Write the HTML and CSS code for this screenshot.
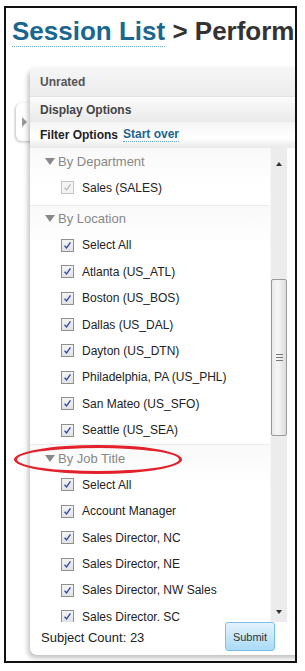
FILE: index.html
```html
<!DOCTYPE html>
<html lang="en">

<head>
    <meta charset="UTF-8">
    <title>Session List</title>
    <link rel="stylesheet" href="styles.css">
</head>

<body>

    <div class="frame">
        <div class="page-title">
            <span class="crumb">Session List</span> &gt; Performance Review
        </div>

        <div class="side-tab">
            <span class="side-arrow"></span>
        </div>

        <div class="panel">
            <div class="hdr hdr-unrated">Unrated</div>
            <div class="hdr hdr-display">Display Options</div>
            <div class="hdr hdr-filter">Filter Options <a class="start-over" href="#">Start over</a></div>

            <div class="filter-box">
                <div class="filter-list">
                    <div class="group">
                        <div class="group-title"><span class="tri"></span>By Department</div>
                        <label class="item disabled"><span class="cb"><svg viewBox="0 0 13 13"><path d="M3 6.8 L5.4 9.4 L10 2.8" /></svg></span>Sales (SALES)</label>
                    </div>
                    <div class="group tight">
                        <div class="group-title"><span class="tri"></span>By Location</div>
                        <label class="item"><span class="cb"><svg viewBox="0 0 13 13"><path d="M3 6.8 L5.4 9.4 L10 2.8" /></svg></span>Select All</label>
                        <label class="item"><span class="cb"><svg viewBox="0 0 13 13"><path d="M3 6.8 L5.4 9.4 L10 2.8" /></svg></span>Atlanta (US_ATL)</label>
                        <label class="item"><span class="cb"><svg viewBox="0 0 13 13"><path d="M3 6.8 L5.4 9.4 L10 2.8" /></svg></span>Boston (US_BOS)</label>
                        <label class="item"><span class="cb"><svg viewBox="0 0 13 13"><path d="M3 6.8 L5.4 9.4 L10 2.8" /></svg></span>Dallas (US_DAL)</label>
                        <label class="item"><span class="cb"><svg viewBox="0 0 13 13"><path d="M3 6.8 L5.4 9.4 L10 2.8" /></svg></span>Dayton (US_DTN)</label>
                        <label class="item"><span class="cb"><svg viewBox="0 0 13 13"><path d="M3 6.8 L5.4 9.4 L10 2.8" /></svg></span>Philadelphia, PA (US_PHL)</label>
                        <label class="item"><span class="cb"><svg viewBox="0 0 13 13"><path d="M3 6.8 L5.4 9.4 L10 2.8" /></svg></span>San Mateo (US_SFO)</label>
                        <label class="item"><span class="cb"><svg viewBox="0 0 13 13"><path d="M3 6.8 L5.4 9.4 L10 2.8" /></svg></span>Seattle (US_SEA)</label>
                    </div>
                    <div class="group">
                        <div class="group-title"><span class="tri"></span>By Job Title</div>
                        <label class="item"><span class="cb"><svg viewBox="0 0 13 13"><path d="M3 6.8 L5.4 9.4 L10 2.8" /></svg></span>Select All</label>
                        <label class="item"><span class="cb"><svg viewBox="0 0 13 13"><path d="M3 6.8 L5.4 9.4 L10 2.8" /></svg></span>Account Manager</label>
                        <label class="item"><span class="cb"><svg viewBox="0 0 13 13"><path d="M3 6.8 L5.4 9.4 L10 2.8" /></svg></span>Sales Director, NC</label>
                        <label class="item"><span class="cb"><svg viewBox="0 0 13 13"><path d="M3 6.8 L5.4 9.4 L10 2.8" /></svg></span>Sales Director, NE</label>
                        <label class="item"><span class="cb"><svg viewBox="0 0 13 13"><path d="M3 6.8 L5.4 9.4 L10 2.8" /></svg></span>Sales Director, NW Sales</label>
                        <label class="item"><span class="cb"><svg viewBox="0 0 13 13"><path d="M3 6.8 L5.4 9.4 L10 2.8" /></svg></span>Sales Director. SC</label>
                    </div>
                </div>

                <div class="scrollbar">
                    <span class="arrow-up"></span>
                    <div class="thumb"><span class="grip"></span></div>
                    <span class="arrow-down"></span>
                </div>
                <div class="filler"></div>
            </div>

            <div class="panel-foot">
                <span class="count">Subject Count: 23</span>
                <button class="submit">Submit</button>
            </div>
        </div>

        <!-- annotation -->
        <div class="circle-mark"></div>
    </div>

</body>

</html>
```

FILE: styles.css
```css
* {
    box-sizing: border-box;
}

body {
    margin: 0;
    background-color: white;
    font-family: 'Liberation Sans', Arial, sans-serif;
}

.frame {
    position: relative;
    margin: 6px 0 0 4px;
    width: 293px;
    height: 657px;
    border: 2px solid #111;
    overflow: hidden;
}

.page-title {
    height: 59px;
    padding: 8px 0 0 6px;
    font-size: 26px;
    line-height: 30px;
    font-weight: bold;
    color: #333;
    white-space: nowrap;
}

.crumb {
    color: #1b6690;
    border-bottom: 1px dotted #6ea8c8;
}

.side-tab {
    position: absolute;
    left: 10px;
    top: 95px;
    width: 20px;
    height: 38px;
    background-color: white;
    border-radius: 6px 0 0 6px;
    box-shadow: -1px 1px 3px rgba(0, 0, 0, 0.25);
}

.side-arrow {
    position: absolute;
    left: 6px;
    top: 14px;
    border-left: 5px solid #999;
    border-top: 5px solid transparent;
    border-bottom: 5px solid transparent;
}

.panel {
    position: relative;
    margin-left: 24px;
    width: 290px;
    background-color: white;
    border-radius: 7px 0 0 7px;
    box-shadow: -2px 3px 5px rgba(0, 0, 0, 0.25);
}

.hdr {
    padding-left: 10px;
    font-size: 12px;
    font-weight: bold;
    display: flex;
    align-items: center;
}

.hdr-unrated {
    height: 30px;
    color: #555;
    border-radius: 7px 0 0 0;
    background: linear-gradient(#f6f6f6, #ececec);
    border-bottom: 1px solid #e2e2e2;
}

.hdr-display {
    height: 25px;
    color: #444;
    background: linear-gradient(#fbfbfb, #e9e9e9);
}

.hdr-filter {
    height: 26px;
    color: #222;
    background: linear-gradient(#f4f4f4, #fff 60%, #e9e9e9);
    box-shadow: 0 2px 3px rgba(0, 0, 0, 0.08);
}

.start-over {
    margin-left: 5px;
    color: #1b6690;
    text-decoration: none;
    border-bottom: 1px dotted #6ea8c8;
    line-height: 13px;
}

.filter-box {
    display: flex;
    height: 474px;
}

.filter-list {
    width: 240px;
    overflow: hidden;
}

.group {
    padding-bottom: 4px;
    border-bottom: 1px solid #ececec;
    background: linear-gradient(#f9f9f9, white 40px);
}

.group.tight {
    padding-bottom: 1px;
}

.group-title {
    height: 26.4px;
    display: flex;
    align-items: center;
    padding-left: 15px;
    font-size: 13px;
    color: #888;
}

.tri {
    width: 0;
    height: 0;
    margin-right: 3px;
    border-top: 7px solid #888;
    border-left: 5px solid transparent;
    border-right: 5px solid transparent;
}

.item {
    height: 26.4px;
    display: flex;
    align-items: center;
    padding-left: 31px;
    font-size: 12px;
    color: #222;
}

.cb {
    width: 13px;
    height: 13px;
    margin-right: 8px;
    border: 1px solid #8e8f8f;
    background: linear-gradient(#f4f4f4, #e2e2e2);
    display: flex;
}

.cb svg {
    width: 11px;
    height: 11px;
}

.cb path {
    fill: none;
    stroke: #2d4fa8;
    stroke-width: 1.6;
}

.disabled .cb {
    border-color: #c4c4c4;
    background: #f4f4f4;
}

.disabled .cb path {
    stroke: #bcbcbc;
}

.scrollbar {
    position: relative;
    width: 17px;
    background-color: #ececec;
    border-left: 1px solid #f6f6f6;
}

.arrow-up {
    position: absolute;
    left: 5px;
    top: 14px;
    border-bottom: 4px solid #333;
    border-left: 3.5px solid transparent;
    border-right: 3.5px solid transparent;
}

.arrow-down {
    position: absolute;
    left: 5px;
    bottom: 8px;
    border-top: 4px solid #333;
    border-left: 3.5px solid transparent;
    border-right: 3.5px solid transparent;
}

.thumb {
    margin: 131px 0 0 0;
    height: 157px;
    border: 1px solid #9a9a9a;
    border-radius: 2px;
    background: linear-gradient(to right, #e8e8e8, #f6f6f6 40%, #dcdcdc);
    display: flex;
    align-items: center;
    justify-content: center;
}

.grip {
    width: 7px;
    height: 7px;
    border-top: 1px solid #777;
    border-bottom: 1px solid #777;
    background: linear-gradient(transparent 2px, #777 2px, #777 3px, transparent 3px);
}

.filler {
    flex: 1;
    background-color: #fdfdfd;
}

.panel-foot {
    height: 33px;
    display: flex;
    align-items: center;
    padding: 0 22px 2px 11px;
    position: relative;
    width: 267px;
}

.count {
    flex: 1;
    font-size: 13px;
    color: #222;
}

.submit {
    width: 50px;
    height: 29px;
    margin-top: -2px;
    padding: 0;
    font-family: 'Liberation Sans', Arial, sans-serif;
    font-size: 11px;
    color: #333;
    border: 1px solid #7cc0e8;
    border-radius: 3px;
    background: linear-gradient(#e4f3fc, #a9daf6);
}

.circle-mark {
    position: absolute;
    left: 8px;
    top: 437px;
    width: 168px;
    height: 29px;
    border: 3px solid #e3212b;
    border-radius: 50%;
}
```
